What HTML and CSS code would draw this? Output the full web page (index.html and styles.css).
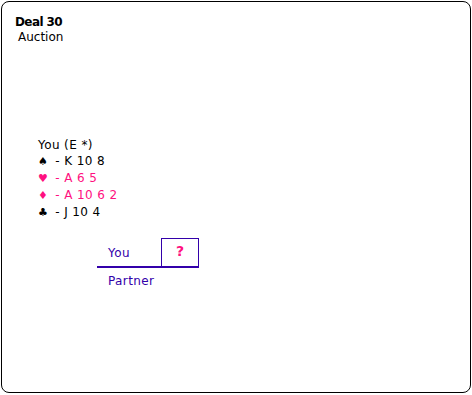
FILE: index.html
```html
<!doctype html>
<html>
<head>
    <meta charset="utf-8">
    <title>Deal 30</title>
    <link rel="stylesheet" href="styles.css">
</head>
<body>
    <div class="frame">
        <div class="title">Deal 30</div>
        <div class="subtitle">Auction</div>

        <div class="hand">
            <div class="seat">You (E *)</div>
            <div class="suit black"><span class="pip">&#9824;</span> - K 10 8</div>
            <div class="suit red"><span class="pip">&#9829;</span> - A 6 5</div>
            <div class="suit red"><span class="pip">&#9830;</span> - A 10 6 2</div>
            <div class="suit black"><span class="pip">&#9827;</span> - J 10 4</div>
        </div>

        <div class="auction">
            <div class="bidRow">
                <div class="player">You</div>
                <div class="bidBox">?</div>
            </div>
            <div class="player partner">Partner</div>
        </div>
    </div>
</body>
</html>
```

FILE: styles.css
```css
body {
    margin: 0;
    background: #fff;
    font-family: "DejaVu Sans", sans-serif;
    font-size: 12px;
    color: #000;
}

.frame {
    margin: 1px;
    width: 470px;
    height: 392px;
    border: 1px solid #000;
    border-radius: 8px;
    box-sizing: border-box;
    padding: 13px 0 0 13px;
}

.title {
    font-weight: bold;
    letter-spacing: -0.6px;
    line-height: 14px;
}

.subtitle {
    margin-left: 3px;
    line-height: 16px;
}

.hand {
    margin: 92px 0 0 23px;
    line-height: 16px;
    letter-spacing: 0.4px;
}

.suit .pip {
    display: inline-block;
    width: 13px;
    font-size: 11px;
}

.red {
    color: #ff1080;
}

.auction {
    margin: 17px 0 0 82px;
    width: 102px;
    color: #3300aa;
}

.bidRow {
    display: flex;
    justify-content: space-between;
    align-items: stretch;
    border-bottom: 2px solid #3300aa;
    height: 28px;
}

.player {
    padding-left: 11px;
    align-self: flex-end;
    line-height: 26px;
    letter-spacing: 0.4px;
}

.bidBox {
    width: 38px;
    border: 1px solid #3300aa;
    border-bottom: none;
    box-sizing: border-box;
    color: #ff1080;
    text-align: center;
    font-size: 14px;
    font-weight: bold;
    line-height: 24px;
}

.partner {
    line-height: 26px;
}
```
